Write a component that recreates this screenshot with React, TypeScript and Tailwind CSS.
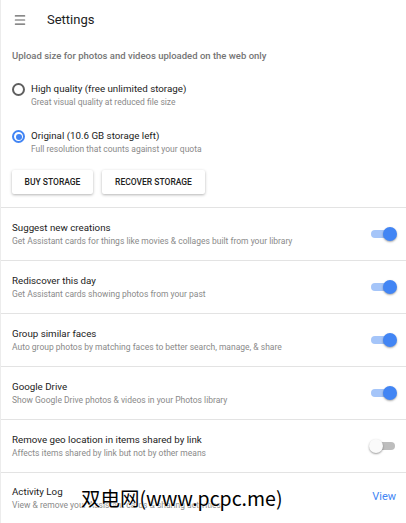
import { Menu } from 'lucide-react'

const rows = [
  { title: 'Suggest new creations', sub: 'Get Assistant cards for things like movies & collages built from your library', on: true },
  { title: 'Rediscover this day', sub: 'Get Assistant cards showing photos from your past', on: true },
  { title: 'Group similar faces', sub: 'Auto group photos by matching faces to better search, manage, & share', on: true },
  { title: 'Google Drive', sub: 'Show Google Drive photos & videos in your Photos library', on: true },
  { title: 'Remove geo location in items shared by link', sub: 'Affects items shared by link but not by other means', on: false },
]

function Toggle({ on }: { on: boolean }) {
  return (
    <div className="relative w-[26px] h-[14px] flex items-center">
      <div className={`w-[24px] h-[8px] rounded-full ${on ? 'bg-[#a5c5f9]' : 'bg-[#bdbdbd]'}`} />
      {on ? (
        <div className="absolute right-0 top-0 w-[14px] h-[14px] rounded-full bg-[#4285f4] shadow-[0_1px_2px_rgba(0,0,0,0.35)]" />
      ) : (
        <div className="absolute left-[-2px] top-0 w-[14px] h-[14px] rounded-full bg-[#fafafa] shadow-[0_1px_2px_rgba(0,0,0,0.4)]" />
      )}
    </div>
  )
}

function Radio({ checked, title, sub }: { checked: boolean; title: string; sub: string }) {
  return (
    <div className="flex pl-[11px]">
      <div className="pt-[1px]">
        {checked ? (
          <div className="w-[13px] h-[13px] rounded-full border-2 border-[#4285f4] flex items-center justify-center">
            <div className="w-[6px] h-[6px] rounded-full bg-[#4285f4]" />
          </div>
        ) : (
          <div className="w-[13px] h-[13px] rounded-full border-2 border-[#5f5f5f]" />
        )}
      </div>
      <div className="ml-[6px]">
        <div className="text-[9.75px] leading-[14px] text-[#212121]">{title}</div>
        <div className="text-[8.5px] leading-[12px] text-[#8a8a8a]">{sub}</div>
      </div>
    </div>
  )
}

export default function App() {
  return (
    <div className="relative w-[406px] h-[523px] overflow-hidden bg-white border-l border-[#ececec] font-['Roboto',sans-serif]">
      {/* Header */}
      <div className="h-10 flex items-center">
        <Menu className="ml-[12px] w-[14px] h-[14px] text-[#616161]" strokeWidth={2} />
        <span className="ml-[20px] text-[13px] text-[#212121]">Settings</span>
      </div>

      <div className="mt-[10px] pl-[11px] text-[9.5px] leading-[12px] font-medium text-[#757575]">
        Upload size for photos and videos uploaded on the web only
      </div>

      <div className="mt-[20px]">
        <Radio checked={false} title="High quality (free unlimited storage)" sub="Great visual quality at reduced file size" />
      </div>
      <div className="mt-[21px]">
        <Radio checked title="Original (10.6 GB storage left)" sub="Full resolution that counts against your quota" />
      </div>

      <div className="mt-[15px] pl-[11px] flex gap-[9px]">
        <button className="w-[81px] h-[24px] rounded-[2px] bg-white shadow-[0_1px_3px_rgba(0,0,0,0.3)] text-[8.5px] font-medium text-[#212121]">
          BUY STORAGE
        </button>
        <button className="w-[103px] h-[24px] rounded-[2px] bg-white shadow-[0_1px_3px_rgba(0,0,0,0.3)] text-[8.5px] font-medium text-[#212121]">
          RECOVER STORAGE
        </button>
      </div>

      <div className="mt-[13px]">
        {rows.map((r) => (
          <div key={r.title} className="h-[53px] border-t border-[#e3e3e3] flex items-center justify-between pl-[11px] pr-[9px]">
            <div className="-mt-[1px]">
              <div className="text-[9.75px] leading-[14px] text-[#212121]">{r.title}</div>
              <div className="text-[8.5px] leading-[12px] text-[#8a8a8a]">{r.sub}</div>
            </div>
            <Toggle on={r.on} />
          </div>
        ))}
        <div className="h-[53px] border-t border-[#e3e3e3] flex items-center justify-between pl-[11px] pr-[10px]">
          <div className="-mt-[3px]">
            <div className="text-[9.75px] leading-[14px] text-[#212121]">Activity Log</div>
            <div className="text-[8.5px] leading-[12px] text-[#8a8a8a]">View & remove your Assistant cards & sharing activities</div>
          </div>
          <span className="-mt-[3px] text-[11px] text-[#4285f4]">View</span>
        </div>
      </div>

      {/* watermark */}
      <div className="absolute left-[80px] top-[484px] text-[19.5px] leading-[28px] text-black font-['Noto_Sans_CJK_SC',sans-serif] [text-shadow:0_0_2px_#fff,0_0_2px_#fff]">
        双电网(www.pcpc.me)
      </div>
    </div>
  )
}
